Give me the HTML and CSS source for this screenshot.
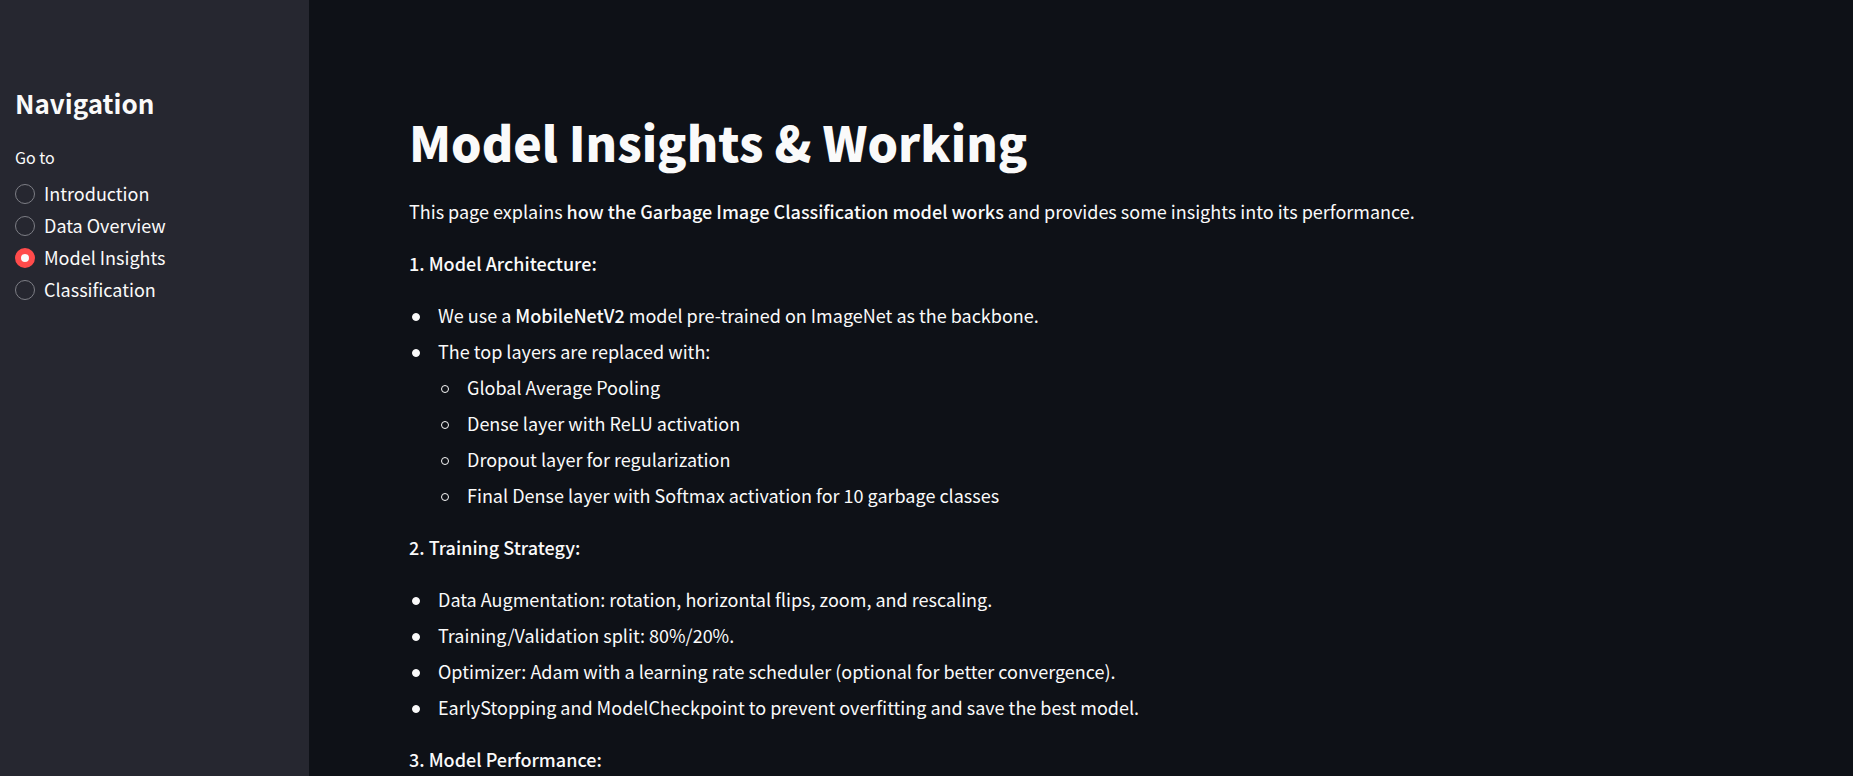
FILE: index.html
```html
<!DOCTYPE html>
<html lang="en">
<head>
<meta charset="utf-8">
<title>Model Insights &amp; Working</title>
<link rel="stylesheet" href="styles.css">
</head>
<body>
<div class="app">
  <aside class="sidebar">
    <h2 class="sidebar-title">Navigation</h2>
    <fieldset class="nav">
      <legend class="nav-label">Go to</legend>
      <label class="option"><input class="radio" type="radio" name="page"><span class="option-text">Introduction</span></label>
      <label class="option"><input class="radio" type="radio" name="page"><span class="option-text">Data Overview</span></label>
      <label class="option"><input class="radio" type="radio" name="page" checked><span class="option-text">Model Insights</span></label>
      <label class="option"><input class="radio" type="radio" name="page"><span class="option-text">Classification</span></label>
    </fieldset>
  </aside>
  <main class="content">
    <h1 class="title">Model Insights &amp; Working</h1>
    <p class="text">This page explains <strong>how the Garbage Image Classification model works</strong> and provides some insights into its performance.</p>
    <p class="text"><strong>1. Model Architecture:</strong></p>
    <ul class="list">
      <li>We use a <strong>MobileNetV2</strong> model pre-trained on ImageNet as the backbone.</li>
      <li>The top layers are replaced with:
        <ul class="sublist">
          <li>Global Average Pooling</li>
          <li>Dense layer with ReLU activation</li>
          <li>Dropout layer for regularization</li>
          <li>Final Dense layer with Softmax activation for 10 garbage classes</li>
        </ul>
      </li>
    </ul>
    <p class="text"><strong>2. Training Strategy:</strong></p>
    <ul class="list">
      <li>Data Augmentation: rotation, horizontal flips, zoom, and rescaling.</li>
      <li>Training/Validation split: 80%/20%.</li>
      <li>Optimizer: Adam with a learning rate scheduler (optional for better convergence).</li>
      <li>EarlyStopping and ModelCheckpoint to prevent overfitting and save the best model.</li>
    </ul>
    <p class="text"><strong>3. Model Performance:</strong></p>
  </main>
</div>
</body>
</html>
```
FILE: styles.css
```css
*,
*::before {
  box-sizing: border-box;
}

body {
  margin: 0;
  background: #0e1117;
  color: #fafafa;
  font-family: "Noto Sans CJK SC", "Noto Sans", sans-serif;
  font-size: 18px;
  line-height: 32px;
}

strong {
  font-weight: 500;
}

.app {
  display: flex;
  height: 100vh;
  overflow: hidden;
}

.sidebar {
  flex: none;
  width: 309px;
  padding: 83px 15px 0;
  background: #262730;
}

.sidebar-title {
  margin: 0 0 20px;
  font-size: 26px;
  font-weight: 600;
  line-height: 40px;
}

.nav {
  display: flex;
  flex-direction: column;
  margin: 0;
  padding: 0;
  border: 0;
}

.nav-label {
  padding: 0 0 7px;
  font-size: 16px;
  line-height: 28px;
}

.option {
  display: flex;
  align-items: center;
  gap: 9px;
}

.option-text {
  padding-bottom: 2px;
  line-height: 30px;
}

.radio {
  appearance: none;
  flex: none;
  width: 20px;
  height: 20px;
  margin: 0;
  border: 1px solid #7d7e85;
  border-radius: 50%;
}

.radio:checked {
  border: 6px solid #ff4b4b;
  background: #fafafa;
}

.content {
  flex: 1;
  padding: 107px 100px 0;
}

.title {
  margin: 0 0 20px;
  font-size: 48px;
  font-weight: 900;
  line-height: 68px;
}

.text {
  margin: 0 0 20px;
}

.list {
  margin: 0 0 20px;
  padding-left: 29px;
  list-style: none;
}

.list li::before {
  content: "";
  display: inline-block;
  width: 8px;
  height: 8px;
  margin: 0 18px 2px -26px;
  border: 1px solid #fafafa;
  border-radius: 50%;
  background: #fafafa;
}

.list li + li,
.sublist {
  margin-top: 4px;
}

.sublist {
  padding-left: 29px;
  list-style: none;
}

.list .sublist li::before {
  background: transparent;
}
```
